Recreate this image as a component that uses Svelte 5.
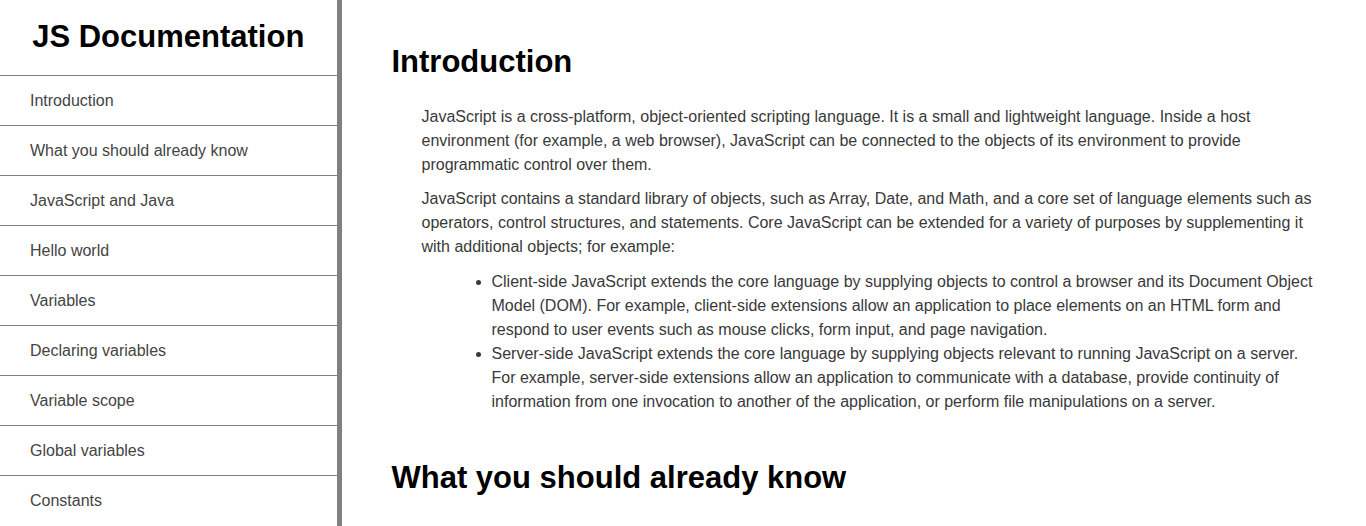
<script>
  const links = [
    'Introduction',
    'What you should already know',
    'JavaScript and Java',
    'Hello world',
    'Variables',
    'Declaring variables',
    'Variable scope',
    'Global variables',
    'Constants',
  ];
  const slug = (text) => text.replaceAll(' ', '_');
</script>

<div class="page">
  <nav>
    <header>JS Documentation</header>
    <ul>
      {#each links as link}
        <li><a href={'#' + slug(link)}>{link}</a></li>
      {/each}
    </ul>
  </nav>
  <main>
    <section id="Introduction">
      <h1>Introduction</h1>
      <article>
        <p>
          JavaScript is a cross-platform, object-oriented scripting language. It is a small and
          lightweight language. Inside a host environment (for example, a web browser), JavaScript
          can be connected to the objects of its environment to provide programmatic control over
          them.
        </p>
        <p>
          JavaScript contains a standard library of objects, such as Array, Date, and Math, and a
          core set of language elements such as operators, control structures, and statements. Core
          JavaScript can be extended for a variety of purposes by supplementing it with additional
          objects; for example:
        </p>
        <ul>
          <li>
            Client-side JavaScript extends the core language by supplying objects to control a
            browser and its Document Object Model (DOM). For example, client-side extensions allow
            an application to place elements on an HTML form and respond to user events such as
            mouse clicks, form input, and page navigation.
          </li>
          <li>
            Server-side JavaScript extends the core language by supplying objects relevant to
            running JavaScript on a server. For example, server-side extensions allow an application
            to communicate with a database, provide continuity of information from one invocation to
            another of the application, or perform file manipulations on a server.
          </li>
        </ul>
      </article>
    </section>
    <section id="What_you_should_already_know">
      <h1>What you should already know</h1>
    </section>
  </main>
</div>

<style>
  :global(body) {
    background: #fff;
    overflow: hidden;
  }

  .page {
    display: grid;
    grid-template-columns: 25% 1fr;
    height: 100vh;
    overflow: hidden;
    font-family: "Liberation Sans", Arial, sans-serif;
    font-size: 16px;
    line-height: 24px;
    color: #393939;
  }

  nav {
    box-sizing: border-box;
    border-right: 5px solid gray;
    overflow: hidden;
  }

  header {
    padding: 19px 0 20px;
    text-align: center;
    font-size: 31px;
    line-height: 36px;
    font-weight: bold;
    color: #000;
  }

  nav ul {
    margin: 0;
    padding: 0;
    list-style: none;
  }

  nav li {
    border-top: 1px solid gray;
  }

  nav a {
    display: block;
    padding: 13px 30px 12px;
    color: #444;
    text-decoration: none;
  }

  main {
    padding: 20px 50px;
    overflow: hidden;
  }

  h1 {
    margin: 24px 0 25px;
    font-size: 31px;
    line-height: 36px;
    color: #000;
  }

  article {
    padding-left: 30px;
  }

  p {
    margin: 0 0 10px;
  }

  article ul {
    margin: 11px 0 46px;
    padding-left: 70px;
  }
</style>
